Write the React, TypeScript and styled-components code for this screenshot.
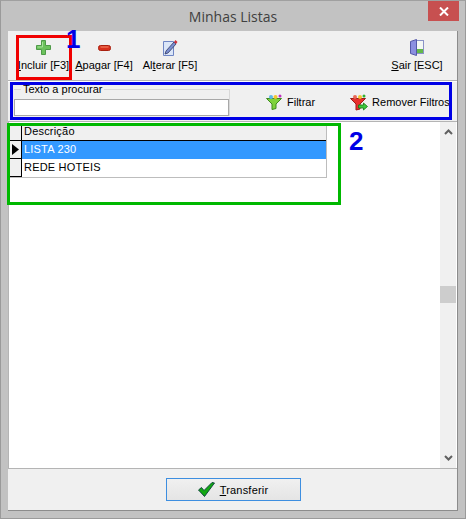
import React from 'react'
import styled, { createGlobalStyle } from 'styled-components'

const GlobalStyle = createGlobalStyle`
  html, body {
    margin: 0;
    padding: 0;
    background: #c2c2c2;
  }
  body {
    font-family: "Liberation Sans", Arial, sans-serif;
    font-size: 11px;
    color: #000;
  }
  * { box-sizing: border-box; }
`

const Window = styled.div`
  position: relative;
  width: 466px;
  height: 519px;
  background: #c2c2c2;
  border: 1px solid #9a9a9a;
  border-top-color: #a0a0a0;
  display: flex;
  flex-direction: column;
  overflow: hidden;
`

const TitleBar = styled.div`
  height: 29px;
  flex: none;
  position: relative;
  display: flex;
  align-items: center;
  justify-content: center;
  padding-top: 2px;
  font-family: "Open Sans", "Noto Sans", sans-serif;
  font-size: 14px;
  color: #404040;
`

const CloseButton = styled.div`
  position: absolute;
  top: 0;
  right: 6px;
  width: 31px;
  height: 20px;
  background: #c75050;
  display: flex;
  align-items: center;
  justify-content: center;
`

const Client = styled.div`
  flex: 1;
  margin: 1px 7px 7px 7px;
  background: #f0f0f0;
  border-right: 1px solid #8c8c8c;
  border-bottom: 1px solid #8c8c8c;
  display: flex;
  flex-direction: column;
  min-height: 0;
`

const Toolbar = styled.div`
  height: 50px;
  flex: none;
  display: flex;
  align-items: flex-start;
  padding: 0 14px 0 9px;
  border-bottom: 1px solid #b4b4b4;
  box-shadow: 0 1px 0 #fff;
`

const ToolButton = styled.div<{ $width: number; $push?: boolean }>`
  width: ${(p) => p.$width}px;
  margin-left: ${(p) => (p.$push ? 'auto' : '0')};
  height: 100%;
  display: flex;
  flex-direction: column;
  align-items: center;
  padding-top: 8px;
  white-space: nowrap;
`

const ToolIcon = styled.div`
  height: 17px;
  display: flex;
  align-items: center;
  justify-content: center;
`

const ToolLabel = styled.span`
  margin-top: 3px;
  line-height: 13px;
`

const FilterBar = styled.div`
  height: 41px;
  flex: none;
  display: flex;
  align-items: flex-start;
  padding: 8px 0 0 6px;
  border-bottom: 1px solid #b4b4b4;
`

const SearchGroup = styled.div`
  width: 216px;
  height: 27px;
  position: relative;
  border-top: 1px solid #d8d8d8;
  border-right: 1px solid #d8d8d8;
  display: flex;
  align-items: flex-end;
`

const SearchLegend = styled.span`
  position: absolute;
  top: -7px;
  left: 7px;
  padding: 0 2px;
  background: #f0f0f0;
  line-height: 13px;
`

const SearchInput = styled.div`
  width: 100%;
  height: 17px;
  background: #fff;
  border: 1px solid #a8a8a8;
`

const FilterButton = styled.div<{ $left: number }>`
  margin-left: ${(p) => p.$left}px;
  margin-top: 5px;
  display: flex;
  align-items: center;
  gap: 4px;
  white-space: nowrap;
  line-height: 15px;
`

const GridArea = styled.div`
  flex: 1;
  min-height: 0;
  display: flex;
  background: #fff;
  border-bottom: 1px solid #b4b4b4;
  border-left: 1px solid #b4b4b4;
  padding-left: 1px;
`

const GridBody = styled.div`
  flex: 1;
  padding-top: 1px;
`

const Table = styled.div`
  width: 317px;
  border-bottom: 1px solid #bdbdbd;
  border-right: 1px solid #bdbdbd;
`

const Row = styled.div`
  display: flex;
  height: 18px;
`

const Indicator = styled.div`
  width: 12px;
  flex: none;
  background: #f0f0f0;
  border-right: 1px solid #000;
  border-bottom: 1px solid #000;
  display: flex;
  align-items: center;
  justify-content: center;
`

const Cell = styled.div<{ $kind: 'head' | 'selected' | 'plain' }>`
  flex: 1;
  padding-left: 2px;
  line-height: 17px;
  letter-spacing: 0.2px;
  background: ${(p) =>
    p.$kind === 'head' ? '#f0f0f0' : p.$kind === 'selected' ? '#3399ff' : '#fff'};
  color: ${(p) => (p.$kind === 'selected' ? '#fff' : '#000')};
  border-bottom: 1px solid ${(p) => (p.$kind === 'head' ? '#000' : 'transparent')};
`

const Scrollbar = styled.div`
  width: 16px;
  flex: none;
  margin-right: 1px;
  background: #f0f0f0;
  position: relative;
  display: flex;
  flex-direction: column;
  justify-content: space-between;
  align-items: center;
  padding: 7px 0 7px;
`

const ScrollThumb = styled.div`
  position: absolute;
  top: 164px;
  left: 0;
  width: 16px;
  height: 17px;
  background: #cdcdcd;
`

const Footer = styled.div`
  height: 41px;
  flex: none;
  display: flex;
  justify-content: center;
  align-items: flex-start;
  padding: 9px 0 0 1px;
`

const TransferButton = styled.div`
  width: 135px;
  height: 23px;
  border: 1px solid #3d8ee0;
  background: linear-gradient(#f0f0f0, #e5e5e5);
  display: flex;
  align-items: center;
  justify-content: center;
  gap: 5px;
  font-size: 11px;
  letter-spacing: 0.2px;
`

const Marker = styled.div<{ $color: string; $x: number; $y: number; $w: number; $h: number }>`
  position: absolute;
  left: ${(p) => p.$x}px;
  top: ${(p) => p.$y}px;
  width: ${(p) => p.$w}px;
  height: ${(p) => p.$h}px;
  border: 3px solid ${(p) => p.$color};
  pointer-events: none;
`

const MarkerNumber = styled.span<{ $x: number; $y: number }>`
  position: absolute;
  left: ${(p) => p.$x}px;
  top: ${(p) => p.$y}px;
  color: #0000e6;
  font-family: "Liberation Sans", Arial, sans-serif;
  font-weight: 700;
  font-size: 26px;
  line-height: 26px;
`

const PlusIcon = () => (
  <svg width="15" height="15" viewBox="0 0 15 15">
    <path d="M5.5.5h4v5h5v4h-5v5h-4v-5h-5v-4h5z" fill="#6cc25c" stroke="#4f9a48" />
    <path d="M6.5 2v5h-5" fill="none" stroke="#a6e29a" />
  </svg>
)

const MinusIcon = () => (
  <svg width="13" height="6" viewBox="0 0 13 6">
    <rect x="0.5" y="0.5" width="12" height="5" rx="2" fill="#d8301c" stroke="#a8200f" />
    <path d="M2.5 2h8" stroke="#f58a6a" />
  </svg>
)

const EditIcon = () => (
  <svg width="17" height="17" viewBox="0 0 17 17">
    <path d="M1.5 2.5h10v14h-10z" fill="#dbe6f8" stroke="#6f86c4" />
    <path d="M3 15l3-1 8-9-2-2-8 9z" fill="#7a8fd0" stroke="#333a66" strokeWidth="0.8" />
    <path d="M12 3l1.5-2 2 2-1.500 2z" fill="#d0303a" />
  </svg>
)

const DoorIcon = () => (
  <svg width="14" height="17" viewBox="0 0 14 17">
    <rect x="5.5" y="1.500" width="8" height="13" fill="#f4f8f4" stroke="#8a93c8" />
    <rect x="7" y="10" width="6" height="4" fill="#63b84a" />
    <path d="M.5 2.500l6-2v16l-6-2z" fill="#8b8fe0" stroke="#5558a8" />
  </svg>
)

const FunnelIcon = ({ color, edge }: { color: string; edge: string }) => (
  <svg width="17" height="16" viewBox="0 0 17 16">
    <path d="M.5 4.500h15l-5.500 5.500v4.500l-4 1v-5.500z" fill={color} stroke={edge} />
    <circle cx="5" cy="3" r="2" fill="#5db8e8" />
    <circle cx="9.500" cy="3" r="2" fill="#f4c430" />
    <circle cx="14" cy="2" r="1.500" fill="#c030c0" />
  </svg>
)

const RemoveFunnelIcon = () => (
  <svg width="18" height="17" viewBox="0 0 18 17">
    <path d="M.5 4.500h15l-5.500 5.500v5l-4 1v-6z" fill="#e8302c" stroke="#a01818" />
    <circle cx="5" cy="3" r="2" fill="#e86858" />
    <circle cx="10" cy="3" r="2" fill="#f4c430" />
    <circle cx="14" cy="2" r="1.500" fill="#30b030" />
    <path d="M8.500 11h5V9l4 3.500-4 3.500v-2h-5z" fill="#3fc63f" stroke="#137a13" strokeWidth="0.8" />
  </svg>
)

const CheckIcon = () => (
  <svg width="17" height="15" viewBox="0 0 17 15">
    <path d="M0.500 8l3-2.500 2.500 3L14 .5l2.500.5L6.500 14.500z" fill="#12a812" stroke="#0a3c3c" strokeWidth="0.9" />
  </svg>
)

const Chevron = ({ up }: { up?: boolean }) => (
  <svg width="9" height="6" viewBox="0 0 9 6">
    <path
      d={up ? 'M1 5l3.500-3.500L8 5' : 'M1 1l3.500 3.500L8 1'}
      fill="none"
      stroke="#606060"
      strokeWidth="2"
    />
  </svg>
)

const App = () => (
  <>
    <GlobalStyle />
    <Window>
      <TitleBar>
        Minhas Listas
        <CloseButton>
          <svg width="10" height="9" viewBox="0 0 10 9">
            <path d="M1 .5l8 8M9 .5l-8 8" stroke="#fff" strokeWidth="2" />
          </svg>
        </CloseButton>
      </TitleBar>
      <Client>
        <Toolbar>
          <ToolButton $width={53}>
            <ToolIcon><PlusIcon /></ToolIcon>
            <ToolLabel><u>I</u>ncluir [F3]</ToolLabel>
          </ToolButton>
          <ToolButton $width={68}>
            <ToolIcon><MinusIcon /></ToolIcon>
            <ToolLabel><u>A</u>pagar [F4]</ToolLabel>
          </ToolButton>
          <ToolButton $width={64}>
            <ToolIcon><EditIcon /></ToolIcon>
            <ToolLabel>Al<u>t</u>erar [F5]</ToolLabel>
          </ToolButton>
          <ToolButton $width={52} $push>
            <ToolIcon><DoorIcon /></ToolIcon>
            <ToolLabel><u>S</u>air [ESC]</ToolLabel>
          </ToolButton>
        </Toolbar>
        <FilterBar>
          <SearchGroup>
            <SearchLegend>Texto a procurar</SearchLegend>
            <SearchInput />
          </SearchGroup>
          <FilterButton $left={36}>
            <FunnelIcon color="#7ed23c" edge="#3e8a20" />
            Filtrar
          </FilterButton>
          <FilterButton $left={35}>
            <RemoveFunnelIcon />
            Remover Filtros
          </FilterButton>
        </FilterBar>
        <GridArea>
          <GridBody>
            <Table>
              <Row>
                <Indicator />
                <Cell $kind="head">Descrição</Cell>
              </Row>
              <Row>
                <Indicator>
                  <svg width="7" height="11" viewBox="0 0 7 11">
                    <path d="M0 0l7 5.500L0 11z" fill="#000" />
                  </svg>
                </Indicator>
                <Cell $kind="selected">LISTA 230</Cell>
              </Row>
              <Row>
                <Indicator />
                <Cell $kind="plain">REDE HOTEIS</Cell>
              </Row>
            </Table>
          </GridBody>
          <Scrollbar>
            <Chevron up />
            <ScrollThumb />
            <Chevron />
          </Scrollbar>
        </GridArea>
        <Footer>
          <TransferButton>
            <CheckIcon />
            <span><u>T</u>ransferir</span>
          </TransferButton>
        </Footer>
      </Client>
      <Marker $color="#f00000" $x={15} $y={34} $w={56} $h={45} />
      <Marker $color="#0000e6" $x={9} $y={81} $w={442} $h={38} />
      <Marker $color="#00b800" $x={6} $y={122} $w={334} $h={82} />
      <MarkerNumber $x={65} $y={25}>1</MarkerNumber>
      <MarkerNumber $x={348} $y={127}>2</MarkerNumber>
    </Window>
  </>
)

export default App
